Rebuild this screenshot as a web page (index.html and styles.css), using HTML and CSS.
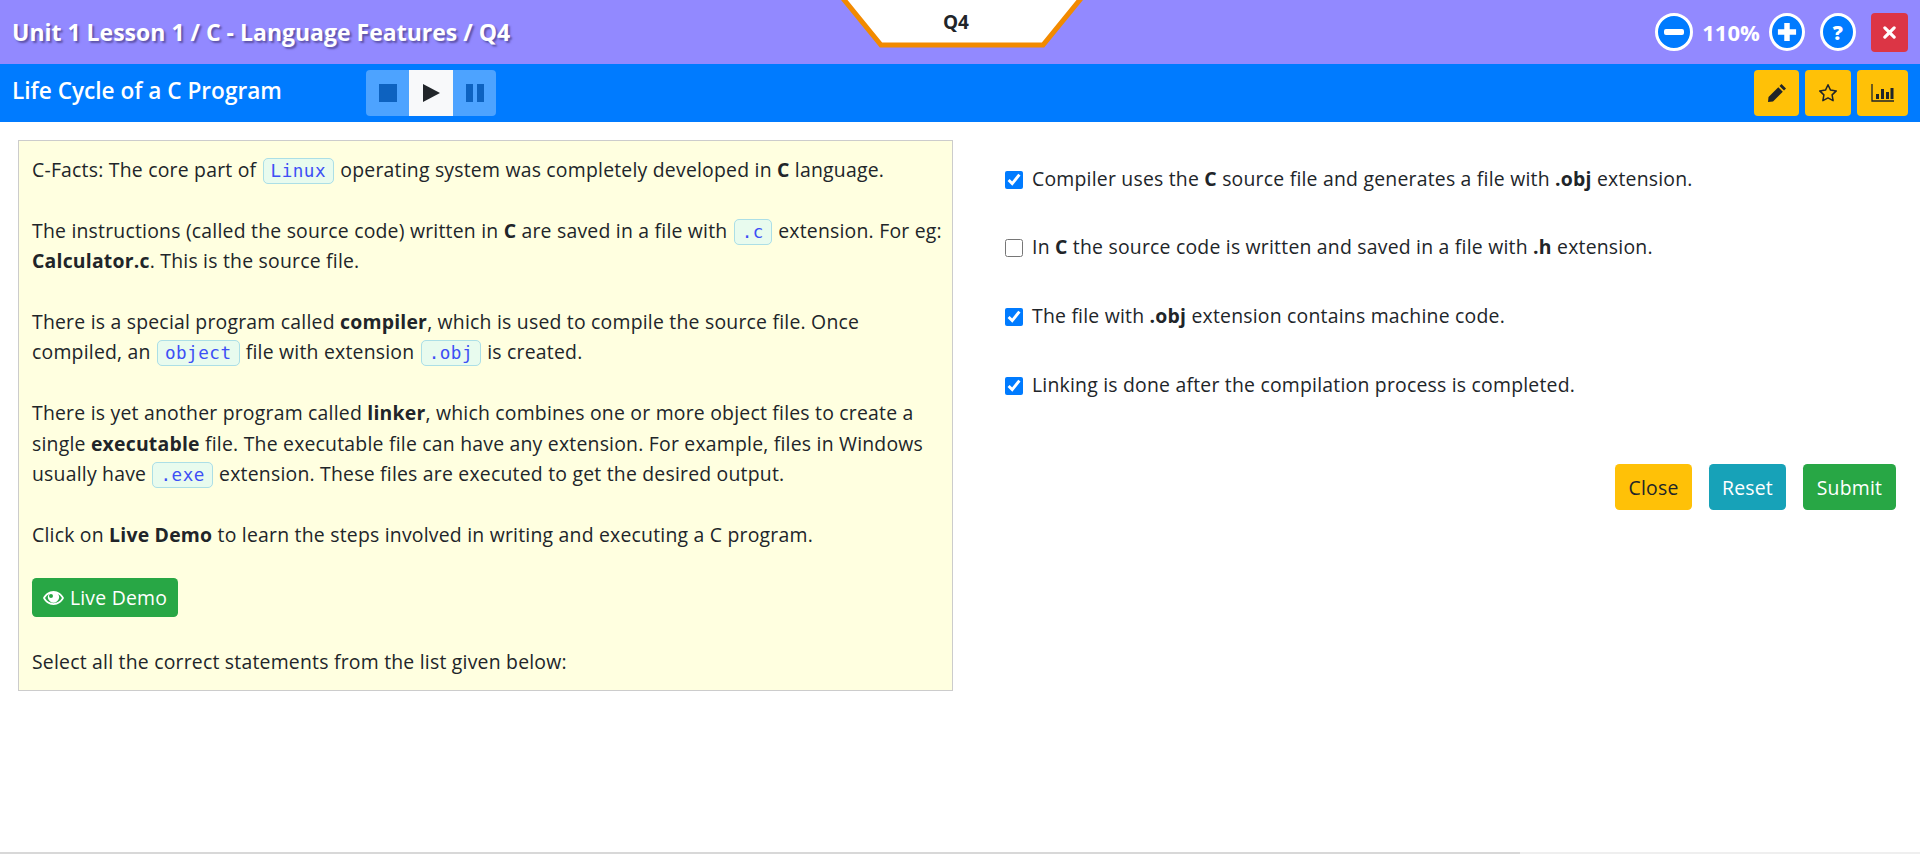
FILE: index.html
```html
<!DOCTYPE html>
<html lang="en">
<head>
  <meta charset="UTF-8">
  <title>Life Cycle of a C Program</title>
  <link rel="stylesheet" href="styles.css">
</head>
<body>

<div class="page">
  <div class="topbar">
    <div class="crumb">Unit 1 Lesson 1 / C - Language Features / Q4</div>
    <svg class="qtab" width="250" height="49" viewBox="0 0 250 49">
      <polygon points="4,-4 44,45 206,45 246,-4" fill="#fff" stroke="#f28a00" stroke-width="5"/>
    </svg>
    <div class="qlabel">Q4</div>
    <div class="zoombox">
      <button class="round round-lg">
        <svg width="22" height="22" viewBox="0 0 22 22"><rect x="1" y="8" width="20" height="6" rx="2" fill="#fff"/></svg>
      </button>
      <span class="zoomval">110%</span>
      <button class="round">
        <svg width="20" height="20" viewBox="0 0 22 22"><path d="M8 1h6v7h7v6h-7v7H8v-7H1V8h7z" fill="#fff"/></svg>
      </button>
      <button class="round help">?</button>
      <button class="closex">
        <svg width="13" height="13" viewBox="0 0 14 14"><path d="M2 2l10 10M12 2L2 12" stroke="#fff" stroke-width="3.4" stroke-linecap="round"/></svg>
      </button>
    </div>
  </div>

  <div class="subbar">
    <div class="subtitle">Life Cycle of a C Program</div>
    <div class="player">
      <span class="pbtn"><svg width="18" height="18" viewBox="0 0 18 18"><rect width="18" height="18" fill="#0d62c0"/></svg></span>
      <span class="pbtn on"><svg width="18" height="18" viewBox="0 0 18 18"><polygon points="1,0 18,9 1,18" fill="#212529"/></svg></span>
      <span class="pbtn"><svg width="18" height="18" viewBox="0 0 18 18"><path d="M0 0h7v18H0zM11 0h7v18h-7z" fill="#0d62c0"/></svg></span>
    </div>
    <div class="tools">
      <button class="tool w45">
        <svg width="20" height="20" viewBox="0 0 20 20"><path d="M14.5 1l4.5 4.500-2 2L12.500 3zM11.300 4.200l4.500 4.500L6 18.500 1 19l.5-5z" fill="#212529"/></svg>
      </button>
      <button class="tool w46">
        <svg width="20" height="20" viewBox="0 0 20 20"><path d="M10 1.800l2.500 5.300 5.800.8-4.200 4 1 5.800-5.100-2.800-5.100 2.800 1-5.800-4.200-4 5.800-.8z" fill="none" stroke="#212529" stroke-width="1.500" stroke-linejoin="round"/></svg>
      </button>
      <button class="tool w51">
        <svg width="24" height="20" viewBox="0 0 24 20"><path d="M1 1v17h22" fill="none" stroke="#212529" stroke-width="1.300"/><path d="M5 11h3v5H5zM10 6h3v10h-3zM15 9h3v7h-3zM19.500 5h3v11h-3z" fill="#212529"/></svg>
      </button>
    </div>
  </div>

  <div class="content">
    <div class="facts">
      C-Facts: The core part of <code>Linux</code> operating system was completely developed in <b>C</b> language.<br><br>
      The instructions (called the source code) written in <b>C</b> are saved in a file with <code>.c</code> extension. For eg: <b>Calculator.c</b>. This is the source file.<br><br>
      There is a special program called <b>compiler</b>, which is used to compile the source file. Once compiled, an <code>object</code> file with extension <code>.obj</code> is created.<br><br>
      There is yet another program called <b>linker</b>, which combines one or more object files to create a single <b>executable</b> file. The executable file can have any extension. For example, files in Windows usually have <code>.exe</code> extension. These files are executed to get the desired output.<br><br>
      Click on <b>Live Demo</b> to learn the steps involved in writing and executing a C program.<br>
      <button class="btn demo">
        <svg width="21" height="14" viewBox="0 0 21 14"><path d="M10.500 0C5.800 0 2 2.900 0 7c2 4.100 5.800 7 10.500 7S19 11.100 21 7c-2-4.100-5.800-7-10.500-7zm0 12.200C6.900 12.200 3.900 10.200 2 7c1-1.700 2.300-3 3.900-3.900a5.500 5.500 0 1 0 9.200 0C16.700 4 18 5.300 19 7c-1.900 3.200-4.900 5.200-8.500 5.200zM8 3a2 2 0 0 1 2 2 2 2 0 0 1-4 0 2 2 0 0 1 2-2z" fill="#fff" fill-rule="evenodd"/></svg>
        Live Demo
      </button><br>
      Select all the correct statements from the list given below:
    </div>

    <div class="answers">
      <label class="opt"><input type="checkbox" checked> <span>Compiler uses the <b>C</b> source file and generates a file with <b>.obj</b> extension.</span></label>
      <label class="opt"><input type="checkbox"> <span>In <b>C</b> the source code is written and saved in a file with <b>.h</b> extension.</span></label>
      <label class="opt"><input type="checkbox" checked> <span>The file with <b>.obj</b> extension contains machine code.</span></label>
      <label class="opt"><input type="checkbox" checked> <span>Linking is done after the compilation process is completed.</span></label>
      <div class="actions">
        <button class="btn close">Close</button>
        <button class="btn reset">Reset</button>
        <button class="btn submit">Submit</button>
      </div>
    </div>
  </div>

  <div class="scrollline"></div>
</div>

</body>
</html>
```

FILE: styles.css
```css
* {
  box-sizing: border-box;
}
body {
  margin: 0;
  font-family: "Open Sans", "Noto Sans", sans-serif;
  font-size: 19.4px;
  letter-spacing: 0.22px;
  color: #212529;
  background-color: #fff;
}
button {
  font-family: inherit;
  letter-spacing: inherit;
  border: none;
  padding: 0;
}
.page {
  height: 854px;
  display: flex;
  flex-direction: column;
  overflow: hidden;
}

/* Barra de arriba */
.topbar {
  position: relative;
  height: 64px;
  background-color: #9289ff;
  display: flex;
  align-items: center;
  justify-content: space-between;
  padding: 0 12px 0 12px;
}
.crumb {
  color: #fff;
  font-size: 23px;
  font-weight: 700;
  letter-spacing: 0;
  text-shadow: 2px 2px 2px #5d52a8;
}
.qtab {
  position: absolute;
  left: 837px;
  top: 0;
}
.qlabel {
  position: absolute;
  left: 943px;
  top: 9px;
  font-size: 19px;
  font-weight: 700;
  letter-spacing: 0;
}
.zoombox {
  display: flex;
  align-items: center;
}
.round {
  width: 36px;
  height: 38px;
  border-radius: 50%;
  border: 3px solid #fff;
  background-color: #007bff;
  color: #fff;
  font-size: 20px;
  font-weight: 800;
  display: flex;
  align-items: center;
  justify-content: center;
}
.round-lg {
  width: 38px;
}
.zoomval {
  color: #fff;
  font-size: 22px;
  font-weight: 700;
  letter-spacing: 0;
  width: 76px;
  text-align: center;
}
.help {
  margin-left: 15px;
}
.closex {
  width: 37px;
  height: 39px;
  margin-left: 15px;
  border-radius: 4px;
  background-color: #dc3545;
  display: flex;
  align-items: center;
  justify-content: center;
}

/* Barra azul */
.subbar {
  position: relative;
  height: 58px;
  background-color: #007bff;
  display: flex;
  align-items: center;
  padding: 0 12px 0 12px;
}
.subtitle {
  color: #fff;
  font-size: 22.6px;
  font-weight: 600;
  letter-spacing: 0;
  width: 354px;
  margin-bottom: 6px;
}
.player {
  display: flex;
  height: 46px;
  border-radius: 4px;
  overflow: hidden;
  background-color: #4da3ff;
}
.pbtn {
  width: 43px;
  display: flex;
  align-items: center;
  justify-content: center;
}
.pbtn.on {
  width: 44px;
  background-color: #f8f9fa;
}
.tools {
  margin-left: auto;
  display: flex;
  gap: 6px;
}
.tool {
  height: 46px;
  border-radius: 4px;
  background-color: #ffc107;
  display: flex;
  align-items: center;
  justify-content: center;
}
.w45 { width: 45px; }
.w46 { width: 46px; }
.w51 { width: 51px; }

/* Contenido */
.content {
  flex: 1;
  display: flex;
  padding: 18px 24px 0 18px;
}
.facts {
  width: 935px;
  height: 551px;
  padding: 14px 6px 0 13px;
  background-color: #ffffe0;
  border: 1px solid #ccc;
  line-height: 30.4px;
}
code {
  font-family: "DejaVu Sans Mono", monospace;
  font-size: 17.6px;
  line-height: 1;
  letter-spacing: 0.5px;
  color: #3d4ff5;
  background-color: #e8fbee;
  border: 1px solid #acdfe6;
  border-radius: 5px;
  padding: 2px 7px;
  margin: 0 1px;
}
.btn {
  height: 46px;
  border-radius: 4.400px;
  font-size: 19.4px;
  color: #fff;
}
.demo {
  height: 39px;
  width: 146px;
  margin: 28px 0 30px;
  vertical-align: top;
  background-color: #28a745;
  display: inline-flex;
  align-items: center;
  justify-content: center;
  gap: 6px;
}
.answers {
  flex: 1;
  padding-left: 52px;
  padding-top: 4px;
}
.opt {
  display: flex;
  align-items: center;
  gap: 9px;
  height: 68.600px;
}
.opt input {
  width: 18px;
  height: 18px;
  margin: 3px 0 0;
  accent-color: #007bff;
}
.actions {
  display: flex;
  justify-content: flex-end;
  gap: 17px;
  margin-top: 46px;
}
.close { width: 77px; background-color: #ffc107; color: #212529; }
.reset { width: 77px; background-color: #17a2b8; }
.submit { width: 93px; background-color: #28a745; }

.scrollline {
  height: 2px;
  background: linear-gradient(to right, #d8d8d8 1520px, #efefef 1520px);
}
```
